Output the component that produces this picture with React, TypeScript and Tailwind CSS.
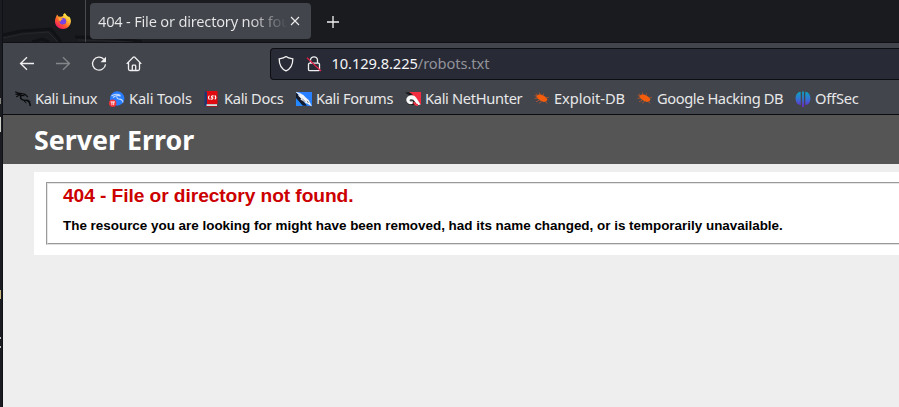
import React from "react";

const UI = "font-['Noto_Sans',sans-serif]";

function Firefox() {
  return (
    <svg viewBox="0 0 16 16" className="h-4 w-4">
      <defs>
        <linearGradient id="ff" x1="0.85" y1="0.1" x2="0.2" y2="0.95">
          <stop offset="0" stopColor="#fff44f" />
          <stop offset="0.35" stopColor="#ffb030" />
          <stop offset="0.65" stopColor="#ff5a2c" />
          <stop offset="1" stopColor="#f0156a" />
        </linearGradient>
      </defs>
      <path d="M1.4 3.2 2 1.4 3.5 3.6 6 3.7 8.3 3 8 1.8 9.8.1 12 2.8 13.7 4 13.9 3.2C15.3 4.8 16 6.6 15.9 8.5 15.6 12.9 12.2 16 8 16 3.6 16 .1 12.600 0 8.500 0 6.500.5 4.600 1.400 3.200z" fill="url(#ff)" />
      <circle cx="7.9" cy="8.3" r="3.3" fill="#7542e5" />
      <path d="M3.200 5.100 6.200 5 8 6.200 6.100 7 5.700 8.400C4.300 8.100 3.300 7.100 3.200 5.100z" fill="#ffa436" />
    </svg>
  );
}

function KaliIcon() {
  return (
    <svg viewBox="0 0 16 16" className="h-4 w-4">
      <path d="M.2.800 3.500 2.200 6.500 2.500 10 3.400 12.800 6M.5 3.200 4 3.300 6.300 4.300 9.500 4.600M1.200 5.700 3.300 4.700 5 3.800" fill="none" stroke="#090a0c" strokeWidth="1.200" />
      <path d="M6.500 3.500Q4.600 6.500 6.600 8.200T12 9.300Q14.800 10.300 15.300 15" fill="none" stroke="#090a0c" strokeWidth="1.500" />
      <path d="M9.500 9 9.800 11 11.300 12M12.300 9.500 15.300 10.500" fill="none" stroke="#090a0c" strokeWidth=".9" />
    </svg>
  );
}
function ToolsIcon() {
  return (
    <svg viewBox="0 0 16 16" className="h-4 w-4">
      <circle cx="8.2" cy="7.500" r="7.200" fill="#287cff" />
      <path d="M2.500 5Q7 1.800 11.500 4.500M4 6.500Q8 3.300 11.500 5.200M8 5.500Q7.500 8 10.500 8.100T14 11.500" fill="none" stroke="#c4dcff" strokeWidth="1.100" />
      <circle cx="3.7" cy="12.200" r="3.700" fill="#ee3037" />
      <path d="M1.500 10.900H6M2.900 11V14.200M4.700 11V14.200" fill="none" stroke="#fff" strokeWidth=".9" />
    </svg>
  );
}
function DocsIcon() {
  return (
    <svg viewBox="0 0 16 16" className="h-4 w-4">
      <path d="M1.500 0H13.500V13H1.500z" fill="#df0b10" />
      <path d="M.500.5H3V15H.5z" fill="#203772" />
      <path d="M2.500 13.200H13V15H2.500z" fill="#ddd" />
      <path d="M3 15H13.500V15.800H2z" fill="#b70c12" />
      <path d="M5.500 4.600Q3.500 6.500 5.500 8.500M10.800 4.300Q12.800 6.500 10.800 8.400M9.700 5Q7.500 4.500 7.400 6L8.900 7Q8.900 8.600 6.500 8" fill="none" stroke="#fff" strokeWidth="1.100" />
    </svg>
  );
}
function ForumsIcon() {
  return (
    <svg viewBox="0 0 16 16" className="h-4 w-4">
      <path d="M0 1H16V15H0z" fill="#2680ff" />
      <path d="M0 1 11 14.800H6L0 10z" fill="#111b2d" />
      <path d="M0 7 7 15H0z" fill="#2387ff" />
      <path d="M0 1.200 3.700 2.200 7.500 4.300 10 7 12.500 9 15.500 15 11.500 12.600 9.800 12 7.500 10 4.800 8.500 5.200 7.200 2.200 4.500 4 4.500z" fill="#f4f5f7" stroke="#f4f5f7" strokeWidth=".4" />
      <path d="M6 7.500 9.300 10.800M11 9.800 12.500 12" stroke="#44546a" strokeWidth=".7" />
    </svg>
  );
}
function HunterIcon() {
  return (
    <svg viewBox="0 0 16 16" className="h-4 w-4">
      <path d="M4 1H16V14L10 7z" fill="#f22c40" />
      <path d="M0 1.500 4 1.300 8 3.500 5 4.200 3 3.500zM3 14 8 9 13 14z" fill="#171719" />
      <path d="M2.500 11.800C-.4 8.700 2.200 4.500 6 4.300 10.700 4.100 11.200 7 15.500 13.500L12.500 14.200C9.800 11.300 9.500 8.200 6.500 8.200 4.200 8.200 4.100 9.700 5.500 10.500L8 10.300 7.500 13 4.500 13.200z" fill="#fafafa" />
      <path d="M9 11Q9.500 14 13 14" fill="none" stroke="#ef3346" strokeWidth="1.800" />
    </svg>
  );
}
function BugIcon() {
  return (
    <svg viewBox="0 0 16 16" className="h-4 w-4">
      <path d="M2.500 4.200 5.500 3.200 8.500 4.100 11.600 6 13.500 8.300 12.500 10.300 9.800 11 5.700 9.200 2.700 6.700z" fill="#f45d0b" />
      <path d="M3.500 5 2 2.500M6 4 5.500 1.500M9 5 9.500 2.500M12 7 14.800 6.300M4 7 .5 7.500M5.500 9 2 10.800M8 10 5 12.300M11 10.500 13.300 12.400M3 5.500 .6 4.500" stroke="#b85429" strokeWidth=".8" />
    </svg>
  );
}
function OffSecIcon() {
  return (
    <svg viewBox="0 0 16 16" className="h-4 w-4">
      <defs>
        <linearGradient id="os" x1="0" y1="0" x2="0" y2="16" gradientUnits="userSpaceOnUse">
          <stop stopColor="#08a8be" />
          <stop offset=".5" stopColor="#3273d3" />
          <stop offset="1" stopColor="#7222cf" />
        </linearGradient>
      </defs>
      <path d="M5.700.8V14C2.700 13.900.6 11.300.6 7.500S2.700 1 5.700.8zM7.100.4H8.900V16H7.100zM10.300.8C13.300 1 15.400 3.700 15.400 7.500S13.300 13.900 10.300 14z" fill="url(#os)" />
    </svg>
  );
}

const bookmarks = [
  { label: "Kali Linux", icon: <KaliIcon />, width: "w-[94px]", tracking: "tracking-[-0.4px]" },
  { label: "Kali Tools", icon: <ToolsIcon />, width: "w-[95px]", tracking: "tracking-[-0.15px]" },
  { label: "Kali Docs", icon: <DocsIcon />, width: "w-[92px]", tracking: "tracking-[-0.32px]" },
  { label: "Kali Forums", icon: <ForumsIcon />, width: "w-[109px]", tracking: "tracking-[-0.35px]" },
  { label: "Kali NetHunter", icon: <HunterIcon />, width: "w-[129px]", tracking: "tracking-[-0.33px]" },
  { label: "Exploit-DB", icon: <BugIcon />, width: "w-[103px]", tracking: "tracking-[-0.05px]" },
  { label: "Google Hacking DB", icon: <BugIcon />, width: "w-[158px]", tracking: "tracking-[-0.41px]" },
  { label: "OffSec", icon: <OffSecIcon />, width: "w-[70px]", tracking: "tracking-[-0.2px]" },
];

function TabStrip() {
  return (
    <div className="relative flex h-[42px] shrink-0 bg-[#1a1b1f]">
      <svg className="absolute left-0 top-0 h-[42px] w-[140px]" viewBox="0 0 140 42">
        <path d="M0 35 18 31 48 29 58 42M29 42 39 39 46 42M72 37 112 38 139 42" fill="none" stroke="#111216" strokeWidth="3" />
        <path d="M0 38 20 34 45 32 55 42M75 40 130 42" fill="none" stroke="#26272c" strokeWidth="1" />
      </svg>
      <div className="relative flex h-full w-[83px] items-center border-r border-[#4a4b50] pl-[52px]"><Firefox /></div>
      <div className="relative ml-1 mt-[3px] flex h-9 w-[221px] items-center rounded bg-[#42454c] pl-2">
        <span className="w-[190px] whitespace-nowrap bg-linear-to-r from-[#e8e8e9] from-80% to-[#42454c] bg-clip-text text-[14.67px] leading-6 tracking-[-0.22px] text-transparent">404 - File or directory not fou</span>
        <svg viewBox="0 0 10 10" className="ml-[2px] h-[10px] w-[10px]"><path d="M1 1 9 9M9 1 1 9" stroke="#eeeeef" strokeWidth="1.100" /></svg>
      </div>
      <svg viewBox="0 0 12 12" className="ml-4 mt-4 h-3 w-3"><path d="M6 0V12M0 6H12" stroke="#f1f1f2" strokeWidth="1.300" /></svg>
    </div>
  );
}

function Navigation() {
  return (
    <div className="flex h-10 shrink-0 items-center pl-4">
      <svg viewBox="0 0 16 16" className="mt-px h-4 w-4"><path d="M15 7.500H1.500M8 1.200 1.500 7.500 8 13.800" fill="none" stroke="#f0f0f1" strokeWidth="1.300" /></svg>
      <svg viewBox="0 0 16 16" className="ml-5 mt-px h-4 w-4"><path d="M1 7.500H14.500M8 1.200 14.500 7.500 8 13.800" fill="none" stroke="#85878b" strokeWidth="1.300" /></svg>
      <svg viewBox="0 0 16 16" className="ml-5 mt-px h-4 w-4"><path d="M12.800 3.200A6.500 6.500 0 1 0 14.500 8.200" fill="none" stroke="#f0f0f1" strokeWidth="1.300" /><path d="M15 .7V6.200H9.500z" fill="#f0f0f1" /></svg>
      <svg viewBox="0 0 16 16" className="ml-[19px] mt-px h-4 w-4"><path d="M.7 7.900 7.200 1.200Q8 .5 8.800 1.200L15.300 7.900M2.500 6.400V13Q2.500 14.500 4 14.500H12Q13.500 14.500 13.500 13V6.400M6.300 14.300V9.900Q6.300 9.100 7.100 9.100H8.900Q9.700 9.100 9.700 9.900V14.300" fill="none" stroke="#f0f0f1" strokeWidth="1.300" /></svg>
      <div className="ml-[128px] mt-px flex h-8 min-w-0 grow items-center rounded-l border border-r-0 border-[#0d0e12] bg-[#282a36] pl-[7px]">
        <svg viewBox="0 0 16 16" className="h-4 w-4"><path d="M8 .6Q10 2.100 14.800 2.900C14.800 8.700 12.700 12.700 8 14.900 3.300 12.700 1.200 8.700 1.200 2.900Q6 2.100 8 .6z" fill="none" stroke="#f0f0f1" strokeWidth="1.300" /></svg>
        <svg viewBox="0 0 16 16" className="ml-3 h-4 w-4"><path d="M4.500 7V4.300a3.500 3.500 0 0 1 7 0V7M3.700 7.200H12.300Q13.500 7.200 13.500 8.300V13.500Q13.500 14.700 12.300 14.700H3.700Q2.500 14.700 2.500 13.500V8.300Q2.500 7.200 3.700 7.200z" fill="none" stroke="#f0f0f1" strokeWidth="1.300" /><path d="M1 1.800 15 15" stroke="#e0214a" strokeWidth="1.300" /></svg>
        <span className="-mt-0.5 ml-[9.5px] whitespace-nowrap text-[14.67px] leading-6 tracking-[-0.08px] text-[#f5f5f6]">10.129.8.225<span className="text-[#92939a]">/robots.txt</span></span>
      </div>
    </div>
  );
}

export default function App() {
  return (
    <div className="flex h-[407px] w-[899px] overflow-hidden bg-[#14161b]">
      <aside className="relative w-[3px] shrink-0 border-r border-[#0f1118] bg-[#1a1c21]">
        <i className="absolute left-0 top-[98px] h-[6px] w-[1px] bg-[#85877e]" />
        <i className="absolute left-0 top-[117px] h-[15px] w-[1px] bg-[#d0d1c8]" />
        <i className="absolute left-0 top-[290px] h-[9px] w-[1px] bg-[#c7b57f]" />
        <i className="absolute left-0 top-[337px] h-[2px] w-[1px] bg-[#b8b8b8]" />
        <i className="absolute left-0 top-[346px] h-[2px] w-[1px] bg-[#b8b8b8]" />
      </aside>
      <main className="flex min-w-0 grow flex-col bg-[#eeeeee]">
        <header className={`${UI} shrink-0 bg-[#42454c]`}>
          <TabStrip />
          <div className="h-[72px] border-t border-[#0f1014]">
            <Navigation />
            <nav className="flex h-[31px] items-center pl-3">
              {bookmarks.map(({ label, icon, width, tracking }) => (
                <div key={label} className={`${width} flex h-6 shrink-0 items-center gap-1`}>
                  {icon}
                  <span className={`${tracking} -mt-0.5 whitespace-nowrap text-[14.67px] leading-6 text-[#e8e8e9]`}>{label}</span>
                </div>
              ))}
            </nav>
          </div>
        </header>
        <h1 className="h-[50px] shrink-0 border-t border-[#0c0c0f] bg-[#555555] pl-[31px] pt-[5px] font-['Noto_Sans',sans-serif] text-[26.8px] font-bold leading-[40px] text-white">Server Error</h1>
        <div className="ml-[31px] mt-2 h-[83px] shrink-0 bg-white pl-3 pt-[10px]">
          <div className="h-[63px] border-y border-l border-t-[#999999] border-b-[#e0e0e0] border-l-[#999999]">
            <section className="h-[61px] border-y border-l border-t-[#e6e6e6] border-b-[#999999] border-l-[#e6e6e6] pl-[15px] pt-px font-['Liberation_Sans',Arial,sans-serif] font-bold">
              <h2 className="text-[19.2px] leading-[22px] tracking-[-0.08px] text-[#cc0000]">404 - File or directory not found.</h2>
              <h3 className="mt-[11px] text-[13.43px] leading-[15px] text-black">The resource you are looking for might have been removed, had its name changed, or is temporarily unavailable.</h3>
            </section>
          </div>
        </div>
      </main>
    </div>
  );
}
